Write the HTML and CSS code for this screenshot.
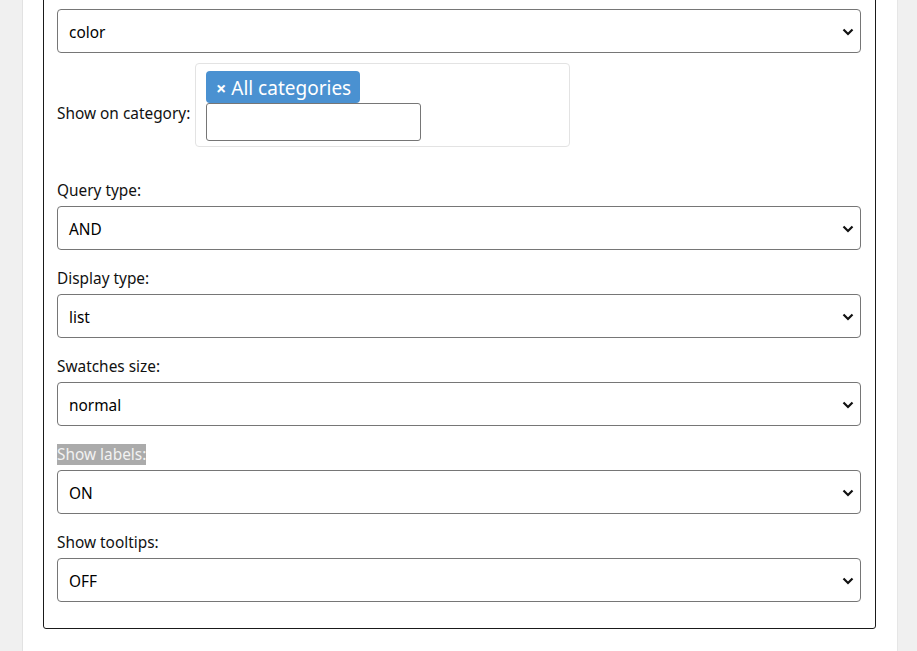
FILE: index.html
```html
<!DOCTYPE html>
<html>
<head>
<meta charset="utf-8">
<link rel="stylesheet" href="styles.css">
</head>
<body>
<div class="page">
  <div class="gutter"></div>
  <div class="panel">
    <div class="box">
      <div class="select"><span>color</span><svg class="chev" width="12" height="8" viewBox="0 0 12 8"><polyline points="1.5,1.5 6,6 10.5,1.5" fill="none" stroke="#111" stroke-width="2.2"/></svg></div>

      <div class="cat-row">
        <label class="cat-label">Show on category:</label>
        <div class="cat-box">
          <div class="tag"><span class="x">×</span> All categories</div>
          <div class="tag-input"></div>
        </div>
      </div>

      <div class="field first">
        <div class="label">Query type:</div>
        <div class="select"><span>AND</span><svg class="chev" width="12" height="8" viewBox="0 0 12 8"><polyline points="1.5,1.5 6,6 10.5,1.5" fill="none" stroke="#111" stroke-width="2.2"/></svg></div>
      </div>
      <div class="field">
        <div class="label">Display type:</div>
        <div class="select"><span>list</span><svg class="chev" width="12" height="8" viewBox="0 0 12 8"><polyline points="1.5,1.5 6,6 10.5,1.5" fill="none" stroke="#111" stroke-width="2.2"/></svg></div>
      </div>
      <div class="field">
        <div class="label">Swatches size:</div>
        <div class="select"><span>normal</span><svg class="chev" width="12" height="8" viewBox="0 0 12 8"><polyline points="1.5,1.5 6,6 10.5,1.5" fill="none" stroke="#111" stroke-width="2.2"/></svg></div>
      </div>
      <div class="field">
        <div class="label"><span class="hl">Show labels:</span></div>
        <div class="select"><span>ON</span><svg class="chev" width="12" height="8" viewBox="0 0 12 8"><polyline points="1.5,1.5 6,6 10.5,1.5" fill="none" stroke="#111" stroke-width="2.2"/></svg></div>
      </div>
      <div class="field">
        <div class="label">Show tooltips:</div>
        <div class="select"><span>OFF</span><svg class="chev" width="12" height="8" viewBox="0 0 12 8"><polyline points="1.5,1.5 6,6 10.5,1.5" fill="none" stroke="#111" stroke-width="2.2"/></svg></div>
      </div>
    </div>
  </div>
  <div class="gutter-r"></div>
</div>
</body>
</html>
```

FILE: styles.css
```css
html, body {
  margin: 0;
  padding: 0;
  background: #f0f0f0;
  font-family: "Noto Sans", "Open Sans", sans-serif;
  font-size: 15.4px;
  color: #111;
  overflow: hidden;
}
.page {
  display: flex;
  height: 651px;
}
.gutter {
  width: 22px;
  flex: 0 0 22px;
  border-right: 1px solid #e2e2e2;
}
.panel {
  flex: 0 0 874px;
  background: #fff;
  border-right: 1px solid #e6e6e6;
}
.gutter-r {
  flex: 1;
}
.box {
  margin: -10px 21px 0 20px;
  border: 1px solid #1a1a1a;
  border-radius: 3px;
  padding: 18px 14px 26px 13px;
}
.select {
  box-sizing: border-box;
  height: 44px;
  border: 1px solid #767676;
  border-radius: 4px;
  display: flex;
  align-items: center;
  justify-content: space-between;
  padding: 2px 6px 0 11px;
  font-size: 15.4px;
  color: #000;
}
.chev {
  display: block;
  margin-top: -1px;
}
.cat-row {
  display: flex;
  align-items: flex-start;
  margin-top: 10px;
}
.cat-label {
  flex: 0 0 138px;
  margin-top: 40px;
  line-height: 21px;
}
.cat-box {
  box-sizing: border-box;
  width: 375px;
  height: 84px;
  border: 1px solid #e3e3e3;
  border-radius: 4px;
  padding: 7px 10px 5px 10px;
}
.tag {
  display: inline-block;
  height: 32px;
  box-sizing: border-box;
  background: #4a91d1;
  color: #fff;
  border-radius: 4px;
  padding: 2px 9px 0 10px;
  font-size: 19px;
  line-height: 30px;
}
.tag .x {
  font-weight: bold;
  font-size: 18px;
}
.tag-input {
  box-sizing: border-box;
  width: 215px;
  height: 38px;
  border: 1px solid #767676;
  border-radius: 3px;
}
.field.first {
  margin-top: 32px;
}
.field {
  margin-top: 17px;
}
.label {
  box-sizing: border-box;
  line-height: 21px;
  height: 21px;
  margin-bottom: 6px;
  padding-top: 1px;
}
.hl {
  background: #ababab;
  color: #f2f2f2;
}
```
